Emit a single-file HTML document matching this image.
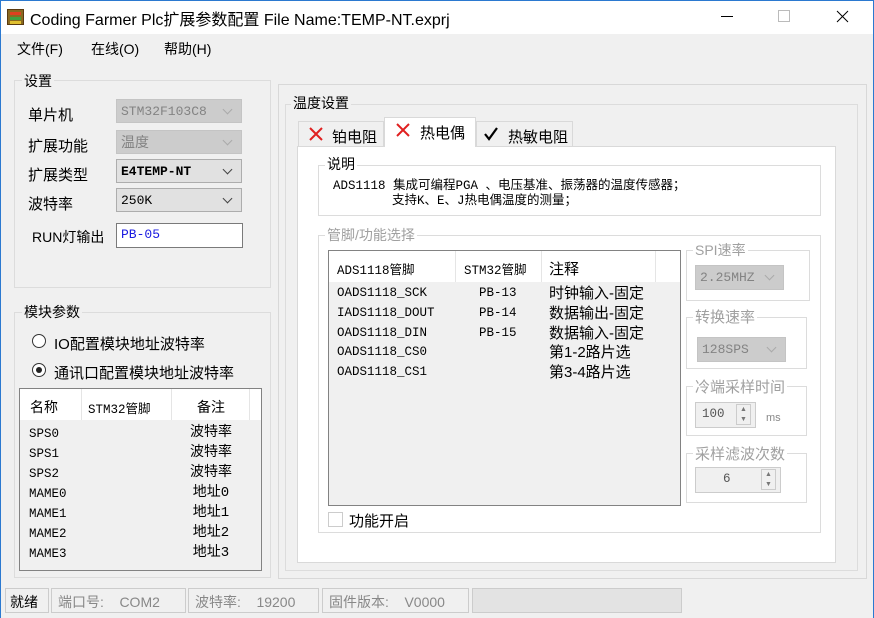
<!DOCTYPE html>
<html><head><meta charset="utf-8"><style>
*{box-sizing:border-box;margin:0;padding:0}
body{width:874px;height:618px;background:#f0f0f0;position:relative;overflow:hidden;font-family:"Liberation Sans","Noto Sans CJK SC",sans-serif;font-size:14px;color:#000}
.a{position:absolute;white-space:nowrap}
.g{position:absolute;border:1px solid #dcdcdc}
.lb{position:absolute;background:#f0f0f0;padding:0 2px;white-space:nowrap}
.m{font-family:"Liberation Mono","Noto Sans CJK SC",monospace;font-size:13px}
.cb{position:absolute;background:#e1e1e1;border:1px solid #adadad;font-family:"Liberation Mono",monospace;font-size:13px;padding:4px 4px}
.cb.d{background:#cccccc;border-color:#c4c4c4;color:#838383}
.cb:after{content:"";position:absolute;right:10px;top:6px;width:6px;height:6px;border-right:1.2px solid #444;border-bottom:1.2px solid #444;transform:rotate(45deg)}
.cb.d:after{border-color:#aaa}
.s{font-size:12.5px;font-family:"Liberation Mono","Noto Sans CJK SC",monospace}
</style></head><body>
<div class="a" style="left:0;top:0;width:874px;height:34px;background:#fff;border-left:1px solid #2b79d0;border-right:1px solid #2b79d0;border-top:1px solid #2b79d0"></div>
<div class="a" style="left:7px;top:9px;width:17px;height:16px;background:#8a6a20;border:1px solid #5a3a10"><div style="margin:2px;height:3px;background:#e04020"></div><div style="margin:1px 2px;height:3px;background:#40a040"></div><div style="margin:1px 2px;height:3px;background:#e0c030"></div></div>
<div class="a" style="left:30px;top:6px;font-size:16px">Coding Farmer Plc扩展参数配置 File Name:TEMP-NT.exprj</div>
<div class="a" style="left:721px;top:16px;width:12px;height:1px;background:#000"></div>
<div class="a" style="left:778px;top:10px;width:12px;height:12px;border:1px solid #bbb"></div>
<svg class="a" style="left:836px;top:10px" width="13" height="13"><path d="M1 1L12 12M12 1L1 12" stroke="#000" stroke-width="1"/></svg>
<div class="a" style="left:0;top:34px;width:1px;height:584px;background:#2b79d0"></div>
<div class="a" style="left:873px;top:34px;width:1px;height:584px;background:#2b79d0"></div>
<div class="a" style="left:17px;top:39px">文件(F)</div>
<div class="a" style="left:91px;top:39px">在线(O)</div>
<div class="a" style="left:164px;top:39px">帮助(H)</div>
<div class="g" style="left:14px;top:80px;width:257px;height:208px"></div>
<div class="lb" style="left:22px;top:71px">设置</div>
<div class="a" style="left:28px;top:104px;font-size:15px">单片机</div>
<div class="a" style="left:28px;top:135px;font-size:15px">扩展功能</div>
<div class="a" style="left:28px;top:164px;font-size:15px">扩展类型</div>
<div class="a" style="left:28px;top:193px;font-size:15px">波特率</div>
<div class="a" style="left:32px;top:227px">RUN灯输出</div>
<div class="cb d" style="left:116px;top:99px;width:126px;height:24px">STM32F103C8</div>
<div class="cb d" style="left:116px;top:130px;width:126px;height:24px;font-family:'Noto Sans CJK SC';font-size:14px;padding-top:1px">温度</div>
<div class="cb" style="left:116px;top:159px;width:126px;height:24px;font-weight:bold">E4TEMP-NT</div>
<div class="cb" style="left:116px;top:188px;width:126px;height:24px">250K</div>
<div class="a m" style="left:116px;top:223px;width:127px;height:25px;background:#fff;border:1px solid #7a7a7a;color:#1a1ae0;padding:3px 4px">PB-05</div>
<div class="g" style="left:14px;top:312px;width:257px;height:266px"></div>
<div class="lb" style="left:22px;top:302px">模块参数</div>
<div class="a" style="left:32px;top:334px;width:14px;height:14px;border:1px solid #333;border-radius:50%;background:#fff"></div>
<div class="a" style="left:54px;top:333px;font-size:15px">IO配置模块地址波特率</div>
<div class="a" style="left:32px;top:363px;width:14px;height:14px;border:1px solid #333;border-radius:50%;background:#fff"><div style="margin:3px;width:6px;height:6px;border-radius:50%;background:#222"></div></div>
<div class="a" style="left:54px;top:362px;font-size:15px">通讯口配置模块地址波特率</div>
<div class="a" style="left:19px;top:388px;width:243px;height:183px;border:1px solid #828282;background:#f0f0f0"></div>
<div class="a" style="left:20px;top:389px;width:241px;height:31px;background:#fff"></div>
<div class="a" style="left:81px;top:389px;width:1px;height:31px;background:#e5e5e5"></div>
<div class="a" style="left:171px;top:389px;width:1px;height:31px;background:#e5e5e5"></div>
<div class="a" style="left:249px;top:389px;width:1px;height:31px;background:#e5e5e5"></div>
<div class="a" style="left:30px;top:397px">名称</div>
<div class="a s" style="left:88px;top:398px">STM32管脚</div>
<div class="a" style="left:197px;top:397px">备注</div>
<div class="a s" style="left:29px;top:424px;line-height:20px">SPS0<br>SPS1<br>SPS2<br>MAME0<br>MAME1<br>MAME2<br>MAME3</div>
<div class="a s" style="left:186px;top:423px;line-height:20px;text-align:center;width:50px;font-size:14px">波特率<br>波特率<br>波特率<br>地址0<br>地址1<br>地址2<br>地址3</div>
<div class="g" style="left:278px;top:84px;width:589px;height:495px;border-color:#d8d8d8"></div>
<div class="g" style="left:285px;top:104px;width:573px;height:467px"></div>
<div class="lb" style="left:291px;top:93px">温度设置</div>
<div class="a" style="left:297px;top:146px;width:539px;height:417px;background:#fff;border:1px solid #d9d9d9"></div>
<div class="a" style="left:298px;top:121px;width:86px;height:26px;background:#f0f0f0;border:1px solid #d9d9d9"></div>
<div class="a" style="left:476px;top:121px;width:97px;height:26px;background:#f0f0f0;border:1px solid #d9d9d9"></div>
<div class="a" style="left:384px;top:117px;width:92px;height:30px;background:#fff;border:1px solid #d9d9d9;border-bottom:none"></div>
<svg class="a" style="left:309px;top:127px" width="14" height="14"><path d="M1 1L13 13M13 1L1 13" stroke="#e02020" stroke-width="2"/></svg><div class="a" style="left:332px;top:126px;font-size:15px">铂电阻</div>
<svg class="a" style="left:396px;top:123px" width="14" height="14"><path d="M1 1L13 13M13 1L1 13" stroke="#e02020" stroke-width="2"/></svg><div class="a" style="left:420px;top:122px;font-size:15px">热电偶</div>
<svg class="a" style="left:483px;top:126px" width="16" height="16"><path d="M2 8L6 13L14 2" stroke="#000" stroke-width="2.2" fill="none"/></svg><div class="a" style="left:508px;top:126px;font-size:15px">热敏电阻</div>
<div class="g" style="left:318px;top:165px;width:503px;height:51px;background:#fff"></div>
<div class="lb" style="left:325px;top:154px;background:#fff">说明</div>
<div class="a s" style="left:333px;top:179px;line-height:15px">ADS1118 集成可编程PGA 、电压基准、振荡器的温度传感器；<br><span style="padding-left:59px">支持K、E、J热电偶温度的测量；</span></div>
<div class="g" style="left:318px;top:235px;width:503px;height:298px;background:#fff"></div>
<div class="lb" style="left:325px;top:225px;background:#fff;color:#a0a0a0">管脚/功能选择</div>
<div class="a" style="left:328px;top:250px;width:353px;height:256px;border:1px solid #828282;background:#f0f0f0"></div>
<div class="a" style="left:329px;top:251px;width:351px;height:31px;background:#fff"></div>
<div class="a" style="left:455px;top:251px;width:1px;height:31px;background:#e5e5e5"></div>
<div class="a" style="left:541px;top:251px;width:1px;height:31px;background:#e5e5e5"></div>
<div class="a" style="left:655px;top:251px;width:1px;height:31px;background:#e5e5e5"></div>
<div class="a s" style="left:337px;top:259px">ADS1118管脚</div>
<div class="a s" style="left:464px;top:259px">STM32管脚</div>
<div class="a" style="left:549px;top:258px;font-size:15px">注释</div>
<div class="a s" style="left:337px;top:284px;line-height:19.8px">OADS1118_SCK<br>IADS1118_DOUT<br>OADS1118_DIN<br>OADS1118_CS0<br>OADS1118_CS1</div>
<div class="a s" style="left:479px;top:284px;line-height:19.8px">PB-13<br>PB-14<br>PB-15</div>
<div class="a" style="left:549px;top:284px;line-height:19.8px;font-size:15px">时钟输入-固定<br>数据输出-固定<br>数据输入-固定<br>第1-2路片选<br>第3-4路片选</div>
<div class="a" style="left:328px;top:512px;width:15px;height:15px;border:1px solid #ccc;background:#fff"></div>
<div class="a" style="left:349px;top:510px;font-size:15px">功能开启</div>
<div class="g" style="left:686px;top:250px;width:124px;height:51px"></div>
<div class="lb" style="left:693px;top:240px;background:#fff;color:#a0a0a0">SPI速率</div>
<div class="cb d" style="left:695px;top:265px;width:89px;height:25px">2.25MHZ</div>
<div class="g" style="left:686px;top:317px;width:121px;height:52px"></div>
<div class="lb" style="left:693px;top:306px;background:#fff;color:#a0a0a0;font-size:15px">转换速率</div>
<div class="cb d" style="left:697px;top:337px;width:89px;height:25px">128SPS</div>
<div class="g" style="left:686px;top:386px;width:121px;height:50px"></div>
<div class="lb" style="left:693px;top:376px;background:#fff;color:#a0a0a0;font-size:15px">冷端采样时间</div>
<div class="a s" style="left:695px;top:402px;width:61px;height:26px;border:1px solid #ccc;background:#f0f0f0;padding:4px 6px;color:#555">100</div>
<div class="a" style="left:736px;top:404px;width:15px;height:21px;border:1px solid #ccc;font-size:7px;color:#777;text-align:center;line-height:10px">▲<br>▼</div>
<div class="a" style="left:766px;top:412px;font-size:11px;color:#888">ms</div>
<div class="g" style="left:686px;top:453px;width:121px;height:50px"></div>
<div class="lb" style="left:693px;top:443px;background:#fff;color:#a0a0a0;font-size:15px">采样滤波次数</div>
<div class="a s" style="left:695px;top:467px;width:86px;height:26px;border:1px solid #ccc;background:#f0f0f0;padding:4px 0 0 27px;color:#555">6</div>
<div class="a" style="left:761px;top:469px;width:15px;height:21px;border:1px solid #ccc;font-size:7px;color:#777;text-align:center;line-height:10px">▲<br>▼</div>
<div class="a" style="left:5px;top:588px;width:44px;height:25px;border:1px solid #ccc;padding:3px 4px">就绪</div>
<div class="a" style="left:51px;top:588px;width:135px;height:25px;border:1px solid #ccc;padding:3px 6px;color:#888">端口号:&nbsp;&nbsp;&nbsp;&nbsp;COM2</div>
<div class="a" style="left:188px;top:588px;width:131px;height:25px;border:1px solid #ccc;padding:3px 6px;color:#888">波特率:&nbsp;&nbsp;&nbsp;&nbsp;19200</div>
<div class="a" style="left:322px;top:588px;width:147px;height:25px;border:1px solid #ccc;padding:3px 6px;color:#888">固件版本:&nbsp;&nbsp;&nbsp;&nbsp;V0000</div>
<div class="a" style="left:472px;top:588px;width:210px;height:25px;border:1px solid #ccc;background:#e3e3e3"></div>
</body></html>
